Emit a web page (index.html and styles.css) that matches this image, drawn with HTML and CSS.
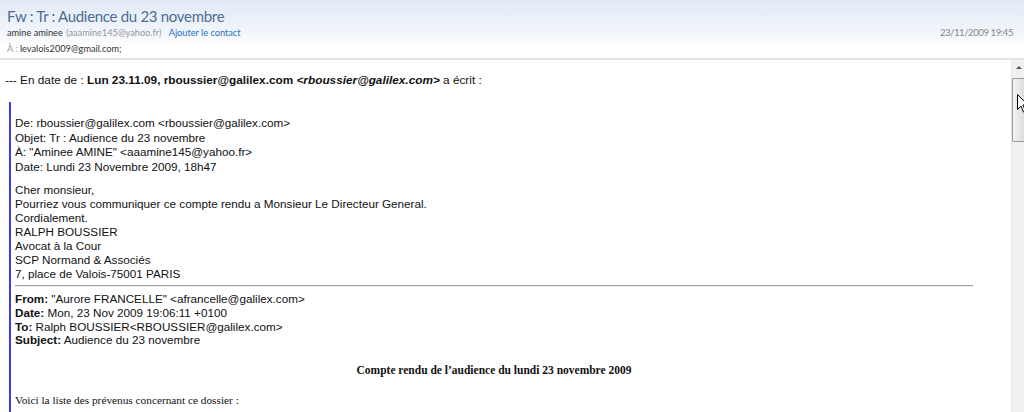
FILE: index.html
```html
<!DOCTYPE html>
<html lang="fr">
<head>
<meta charset="utf-8">
<title>Fw : Tr : Audience du 23 novembre</title>
<link rel="stylesheet" href="styles.css">
</head>
<body>
<header class="header">
  <div class="title">Fw : Tr : Audience du 23 novembre</div>
  <div class="meta-row">
    <div class="sender"><span class="name">amine aminee</span> <span class="addr">(aaamine145@yahoo.fr)</span> <a class="add" href="#">Ajouter le contact</a></div>
    <div class="date">23/11/2009 19:45</div>
  </div>
  <div class="to"><span class="label">À :</span> levalois2009@gmail.com;</div>
</header>
<div class="main">
  <div class="content">
    <p class="intro">--- En date de : <b>Lun 23.11.09, rboussier@galilex.com <i>&lt;rboussier@galilex.com&gt;</i></b> a écrit :</p>
    <blockquote class="quote">
      <div class="fwd-head">De: rboussier@galilex.com &lt;rboussier@galilex.com&gt;<br>Objet: Tr : Audience du 23 novembre<br>À: "Aminee AMINE" &lt;aaamine145@yahoo.fr&gt;<br>Date: Lundi 23 Novembre 2009, 18h47</div>
      <div class="letter">Cher monsieur,<br>Pourriez vous communiquer ce compte rendu a Monsieur Le Directeur General.<br>Cordialement.<br>RALPH BOUSSIER<br>Avocat à la Cour<br>SCP Normand &amp; Associés<br>7, place de Valois-75001 PARIS</div>
      <hr class="rule">
      <div class="orig-head"><b>From:</b> "Aurore FRANCELLE" &lt;afrancelle@galilex.com&gt;<br><b>Date:</b> Mon, 23 Nov 2009 19:06:11 +0100<br><b>To:</b> Ralph BOUSSIER&lt;RBOUSSIER@galilex.com&gt;<br><b>Subject:</b> Audience du 23 novembre</div>
      <div class="doc">
        <p class="doc-title">Compte rendu de l’audience du lundi 23 novembre 2009</p>
        <p class="doc-text">Voici la liste des prévenus concernant ce dossier :</p>
      </div>
    </blockquote>
  </div>
  <div class="scrollbar">
    <div class="arrow"></div>
    <div class="thumb"></div>
    <svg class="cursor" width="12" height="19" viewBox="0 0 12 19"><path d="M0.5 0.5 L0.5 15.5 L4 12 L6.5 18 L8.5 17 L6 11 L11 11 Z" fill="#fff" stroke="#000" stroke-width="1"/></svg>
  </div>
</div>
</body>
</html>
```
FILE: styles.css
```css
html, body {
  margin: 0;
  padding: 0;
  background: #fff;
  overflow: hidden;
}
body {
  width: 1024px;
  height: 412px;
  font-family: "Lato", "Open Sans", sans-serif;
}
.header {
  height: 60px;
  box-sizing: border-box;
  padding: 6px 11px 0 7px;
  background: linear-gradient(to bottom, #e2eaf6 0%, #f1f5fb 55%, #ffffff 80%);
  border-bottom: 2px solid #e3e3e3;
}
.title {
  font-size: 15px;
  color: #4d6d94;
  line-height: 20px;
  letter-spacing: -0.3px;
}
.meta-row {
  display: flex;
  justify-content: space-between;
  align-items: baseline;
  font-size: 9.2px;
  line-height: 13px;
}
.sender .name { color: #333; }
.sender .addr { color: #999; margin-left: 1px; }
.sender .add { color: #1f6fc5; text-decoration: none; margin-left: 5px; }
.date { color: #888; letter-spacing: -0.45px; font-size: 9.6px; }
.to {
  font-size: 9.2px;
  line-height: 13px;
  color: #333;
  margin-top: 3px;
}
.to .label { color: #999; }
.main {
  display: flex;
  height: 352px;
}
.content {
  flex: 1;
  font-family: "Liberation Sans", Arial, sans-serif;
  font-size: 11.7px;
  color: #111;
  padding: 11px 0 0 5px;
}
.intro {
  margin: 0;
  line-height: 18px;
  font-size: 11.8px;
}
.quote {
  margin: 13px 38px 0 4px;
  border-left: 2px solid #3b3bf0;
  padding: 14px 0 20px 4px;
}
.fwd-head {
  line-height: 14.6px;
}
.letter {
  margin-top: 9px;
  line-height: 14px;
}
.rule {
  margin: 4px 0 5px 0;
  border: 0;
  border-top: 1px solid #a0a0a0;
  border-bottom: 1px solid #eee;
  height: 0;
}
.orig-head {
  line-height: 13.7px;
}
.doc {
  font-family: "Liberation Serif", "Times New Roman", serif;
  font-size: 11.5px;
}
.doc-title {
  text-align: center;
  font-weight: bold;
  margin: 15px 0 0 0;
  line-height: 16px;
}
.doc-text {
  margin: 14px 0 0 0;
  line-height: 16px;
  font-size: 11.3px;
}
.scrollbar {
  width: 12px;
  background: #f0f0f0;
  border-left: 1px solid #e6e6e6;
  position: relative;
}
.arrow {
  width: 0;
  height: 0;
  margin: 6px 0 0 4px;
  border-left: 3px solid transparent;
  border-right: 3px solid transparent;
  border-bottom: 3px solid #555;
}
.thumb {
  margin: 9px 0 0 0;
  height: 62px;
  background: linear-gradient(to right, #f5f5f5, #dcdcdc);
  border: 1px solid #9a9a9a;
  border-right: 0;
  border-radius: 2px 0 0 2px;
}
.cursor {
  position: absolute;
  left: 5px;
  top: 34px;
}
```
